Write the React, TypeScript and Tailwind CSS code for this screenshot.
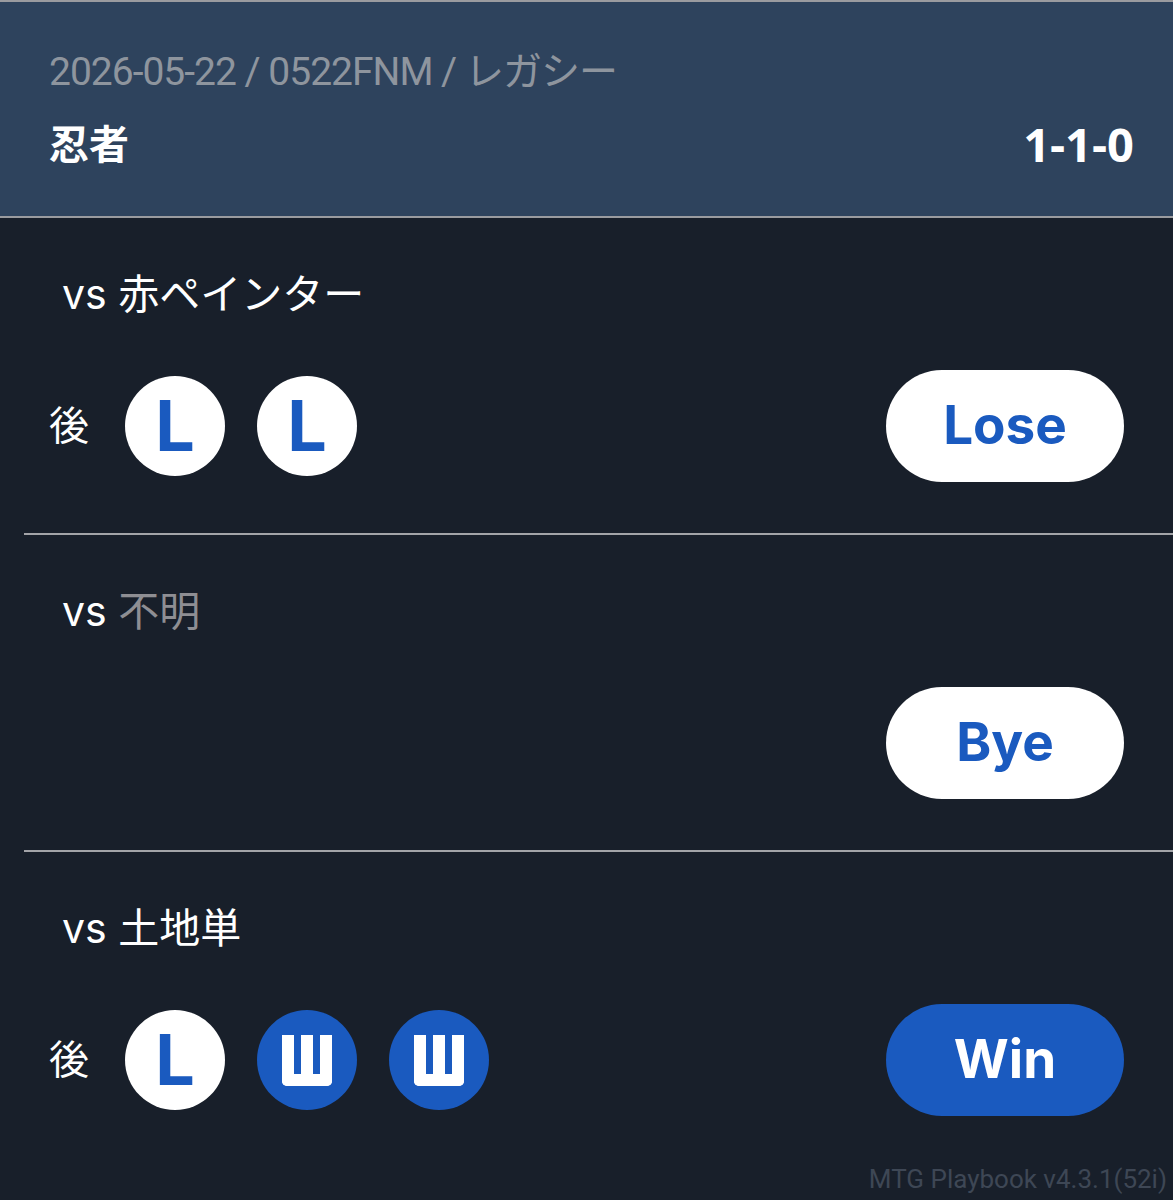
type Game = 'L' | 'W'

type Match = {
  opponent: string
  unknown?: boolean
  turn?: string
  games: Game[]
  result: 'Win' | 'Lose' | 'Bye'
}

const matches: Match[] = [
  { opponent: '赤ペインター', turn: '後', games: ['L', 'L'], result: 'Lose' },
  { opponent: '不明', unknown: true, games: [], result: 'Bye' },
  { opponent: '土地単', turn: '後', games: ['L', 'W', 'W'], result: 'Win' },
]

function GameDot({ g }: { g: Game }) {
  if (g === 'L') {
    return (
      <div className="flex h-[100px] w-[100px] items-center justify-center rounded-full bg-white">
        <span className="font-['Inter',sans-serif] text-[70px] font-bold leading-none text-[#1a5abf]">L</span>
      </div>
    )
  }
  // the W mark is a squared "ш" shape in the app
  return (
    <div className="flex h-[100px] w-[100px] items-center justify-center rounded-full bg-[#1a5abf]" aria-label="W">
      <div className="flex h-[51px] w-[50px] justify-center rounded-b-[5px] border-[12px] border-t-0 border-white">
        <div className="w-[12px] bg-white" />
      </div>
    </div>
  )
}

function ResultButton({ result }: { result: Match['result'] }) {
  const win = result === 'Win'
  return (
    <button
      className={
        win
          ? "flex h-[112px] w-[238px] items-center justify-center rounded-full bg-[#1a5abf] font-['Inter',sans-serif] text-[53px] font-bold text-white"
          : "flex h-[112px] w-[238px] items-center justify-center rounded-full bg-white font-['Inter',sans-serif] text-[53px] font-bold text-[#1a5abf]"
      }
    >
      {result}
    </button>
  )
}

export default function App() {
  return (
    <div className="min-h-[1200px] bg-[#181f2a] font-['Inter','Noto_Sans_CJK_JP',sans-serif] text-white">
      <div className="border-y-2 border-[#9a9b9f] bg-[#2e435d] pl-[49px] pr-[39px] pt-[46px] pb-[48px]">
        <div className="font-['Roboto','Noto_Sans_CJK_JP',sans-serif] text-[39px] leading-[48px] tracking-[-1px] text-[#8e959e]">
          2026-05-22 / 0522FNM / レガシー
        </div>
        <div className="mt-[24px] flex items-center justify-between font-['Open_Sans','Noto_Sans_CJK_JP',sans-serif] font-bold leading-[48px]">
          <span className="text-[40px]">忍者</span>
          <span className="text-[47px]">1-1-0</span>
        </div>
      </div>

      {matches.map((m, i) => (
        <div
          key={i}
          className={
            i < matches.length - 1
              ? 'ml-[24px] border-b-2 border-[#a3a4a8] pt-[52px] pb-[51px]'
              : 'ml-[24px] pt-[52px] pb-[48px]'
          }
        >
          <p className="pl-[38px] text-[41px] leading-[48px]">
            vs <span className={m.unknown ? 'text-[#8e8e93]' : ''}>{m.opponent}</span>
          </p>
          <div className="mt-[52px] flex h-[112px] items-center justify-between pl-[25px] pr-[49px]">
            <div className="flex items-center">
              {m.turn && <span className="text-[40px] leading-none">{m.turn}</span>}
              {m.games.length > 0 && (
                <div className="ml-[36px] flex gap-[32px]">
                  {m.games.map((g, j) => (
                    <GameDot key={j} g={g} />
                  ))}
                </div>
              )}
            </div>
            <ResultButton result={m.result} />
          </div>
        </div>
      ))}

      <div className="pr-[6px] text-right font-['Roboto',sans-serif] text-[26px] leading-[30px] text-[#3e4755]">
        MTG Playbook v4.3.1(52i)
      </div>
    </div>
  )
}
